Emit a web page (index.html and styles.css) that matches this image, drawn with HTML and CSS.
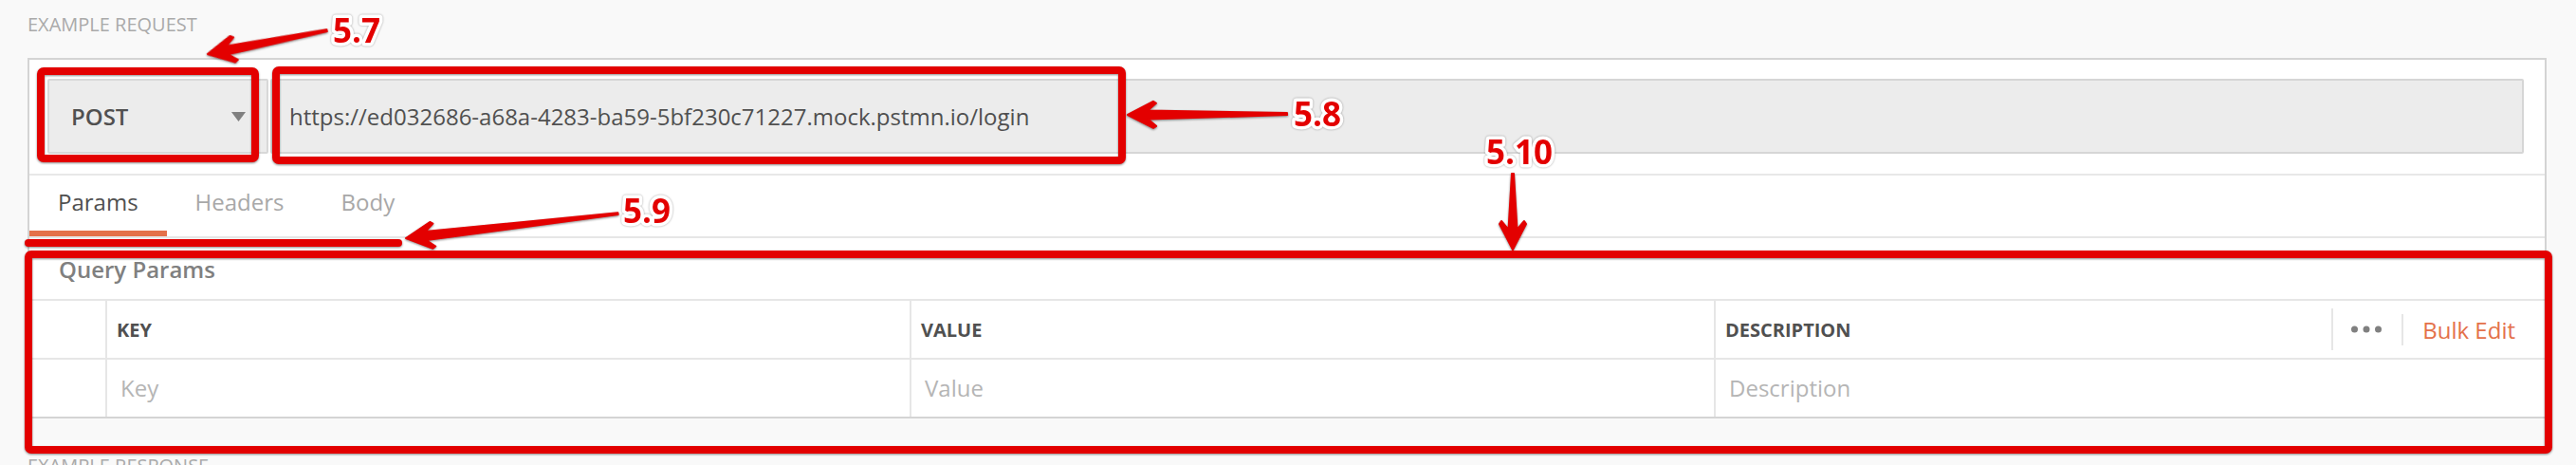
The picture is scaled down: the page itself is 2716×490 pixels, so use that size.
FILE: index.html
```html
<!DOCTYPE html>
<html lang="en">
<head>
<meta charset="utf-8">
<title>Example Request</title>
<link rel="stylesheet" href="styles.css">
</head>
<body>
<div class="page">
  <div class="section-label">EXAMPLE REQUEST</div>
  <div class="panel">
    <div class="url-row">
      <div class="method">
        <span class="method-name">POST</span>
        <svg class="caret" width="15" height="10" viewBox="0 0 15 10"><path d="M0 0 H15 L7.5 10 Z"/></svg>
      </div>
      <div class="url-input">https://ed032686-a68a-4283-ba59-5bf230c71227.mock.pstmn.io/login</div>
    </div>
    <div class="tabs">
      <div class="tab active">Params</div>
      <div class="tab">Headers</div>
      <div class="tab">Body</div>
    </div>
    <div class="params">
      <div class="params-title">Query Params</div>
      <div class="table">
        <div class="row head">
          <div class="cell check"></div>
          <div class="cell">KEY</div>
          <div class="cell">VALUE</div>
          <div class="cell desc">
            <span>DESCRIPTION</span>
            <div class="actions">
              <span class="sep tall"></span>
              <svg class="dots" width="32" height="8" viewBox="0 0 32 8"><circle cx="3.5" cy="4" r="3.5"/><circle cx="16" cy="4" r="3.5"/><circle cx="28.5" cy="4" r="3.5"/></svg>
              <span class="sep"></span>
              <span class="bulk">Bulk Edit</span>
            </div>
          </div>
        </div>
        <div class="row">
          <div class="cell check"></div>
          <div class="cell ph">Key</div>
          <div class="cell ph">Value</div>
          <div class="cell ph">Description</div>
        </div>
      </div>
    </div>
  </div>
  <div class="section-label">EXAMPLE RESPONSE</div>
</div>

<svg class="annotations" width="2716" height="490" viewBox="0 0 2716 490">
  <g class="marks">
    <rect class="box" x="43" y="75" width="226" height="92" rx="3"/>
    <rect class="box" x="291" y="74" width="892" height="95" rx="3"/>
    <rect class="box" x="30" y="268" width="2657" height="206" rx="3"/>
    <line class="bar" x1="30" y1="256" x2="420" y2="256"/>
    <g transform="translate(219 57) rotate(168.8)">
      <path class="arrow" d="M0 0 L-27 -14 L-30 -12 L-21 -4.5 L-128 -1 L-128 1 L-21 4.5 L-30 12 L-27 14 Z"/>
    </g>
    <g transform="translate(1189 121) rotate(179.7)">
      <path class="arrow" d="M0 0 L-27 -14 L-30 -12 L-21 -4.5 L-168 -1 L-168 1 L-21 4.5 L-30 12 L-27 14 Z"/>
    </g>
    <g transform="translate(428 251) rotate(173.4)">
      <path class="arrow" d="M0 0 L-27 -14 L-30 -12 L-21 -4.5 L-225 -1 L-225 1 L-21 4.5 L-30 12 L-27 14 Z"/>
    </g>
    <g transform="translate(1595 263) rotate(90)">
      <path class="arrow" d="M0 0 L-27 -14 L-30 -12 L-21 -4.5 L-80 -1 L-80 1 L-21 4.5 L-30 12 L-27 14 Z"/>
    </g>
  </g>
  <g class="labels">
    <text class="label" x="351" y="45">5.7</text>
    <text class="label" x="1364" y="133">5.8</text>
    <text class="label" x="657" y="235">5.9</text>
    <text class="label" x="1567" y="173">5.10</text>
  </g>
</svg>
</body>
</html>
```

FILE: styles.css
```css
* { box-sizing: border-box; }

html, body {
  margin: 0;
  padding: 0;
}

body {
  position: relative;
  background: #f9f9f9;
  font-family: "Open Sans", "Noto Sans", sans-serif;
  color: #505050;
  overflow: hidden;
  width: 2716px;
  height: 490px;
}

.page {
  padding: 0 31px 0 29px;
}

.section-label {
  height: 61px;
  padding-top: 12px;
  font-size: 20px;
  line-height: 28px;
  color: #aaaaaa;
}

.panel {
  background: #fff;
  border: 2px solid #d4d4d4;
  margin-bottom: 24px;
}

/* URL row */
.url-row {
  display: flex;
  gap: 2px;
  padding: 20px 22px 21px 19px;
}

.method {
  width: 233px;
  height: 79px;
  flex: none;
  display: flex;
  align-items: center;
  justify-content: space-between;
  padding: 0 22px 0 23px;
  background: #ececec;
  border: 2px solid #d8d8d8;
  border-radius: 2px;
}

.method-name {
  font-size: 24px;
  font-weight: 600;
  color: #505050;
}

.caret { fill: #808080; margin-top: 1px; }

.url-input {
  flex: 1;
  height: 79px;
  display: flex;
  align-items: center;
  padding-left: 18px;
  background: #ececec;
  border: 2px solid #d6d6d6;
  border-radius: 2px;
  font-size: 24px;
  color: #505050;
}

/* Tabs */
.tabs {
  display: flex;
  border-top: 2px solid #e8e8e8;
  border-bottom: 2px solid #e6e6e6;
}

.tab {
  height: 64px;
  padding: 12px 30px 0 30px;
  font-size: 24px;
  line-height: 32px;
  color: #a8a8a8;
  border-bottom: 6px solid transparent;
}

.tab.active {
  color: #505050;
  border-bottom-color: #e4714a;
}

/* Params */
.params-title {
  height: 64px;
  padding: 17px 0 0 31px;
  font-size: 24px;
  line-height: 32px;
  font-weight: 600;
  color: #808080;
}

.row {
  display: grid;
  grid-template-columns: 80px 848px 848px 1fr;
  height: 62px;
  border-top: 2px solid #e6e6e6;
}

.cell {
  display: flex;
  align-items: center;
  padding-left: 10px;
  border-left: 2px solid #e6e6e6;
}

.cell.check { border-left: none; }

.head .cell {
  font-size: 20px;
  font-weight: 700;
  color: #505050;
}

.cell.desc {
  justify-content: space-between;
  padding-right: 31px;
}

.actions {
  display: flex;
  align-items: center;
}

.sep {
  width: 2px;
  height: 33px;
  background: #e6e6e6;
  margin-right: 20px;
}

.sep.tall {
  height: 44px;
  margin-right: 19px;
}

.dots {
  fill: #808080;
  margin-right: 21px;
}

.head .cell .bulk {
  font-size: 24px;
  font-weight: 400;
  color: #e4714a;
}

.cell.ph {
  padding-left: 14px;
  padding-bottom: 2px;
  font-size: 24px;
  color: #b5b5b5;
}

/* Annotations overlay */
.annotations {
  position: absolute;
  left: 0;
  top: 0;
  pointer-events: none;
}

.marks {
  filter: drop-shadow(0 1px 1px rgba(0, 0, 0, 0.45));
}

.box {
  fill: none;
  stroke: #e30000;
  stroke-width: 8;
}

.bar {
  stroke: #e30000;
  stroke-width: 8;
  stroke-linecap: round;
}

.arrow {
  fill: #e30000;
  stroke: #e30000;
  stroke-width: 2;
  stroke-linejoin: round;
}

.labels {
  filter: drop-shadow(0 0 1px rgba(0, 0, 0, 0.35));
}

.label {
  font-family: "Open Sans", "Noto Sans", sans-serif;
  font-weight: 700;
  font-size: 35px;
  fill: #e30000;
  stroke: #ffffff;
  stroke-width: 7;
  stroke-linejoin: round;
  paint-order: stroke;
}
```
